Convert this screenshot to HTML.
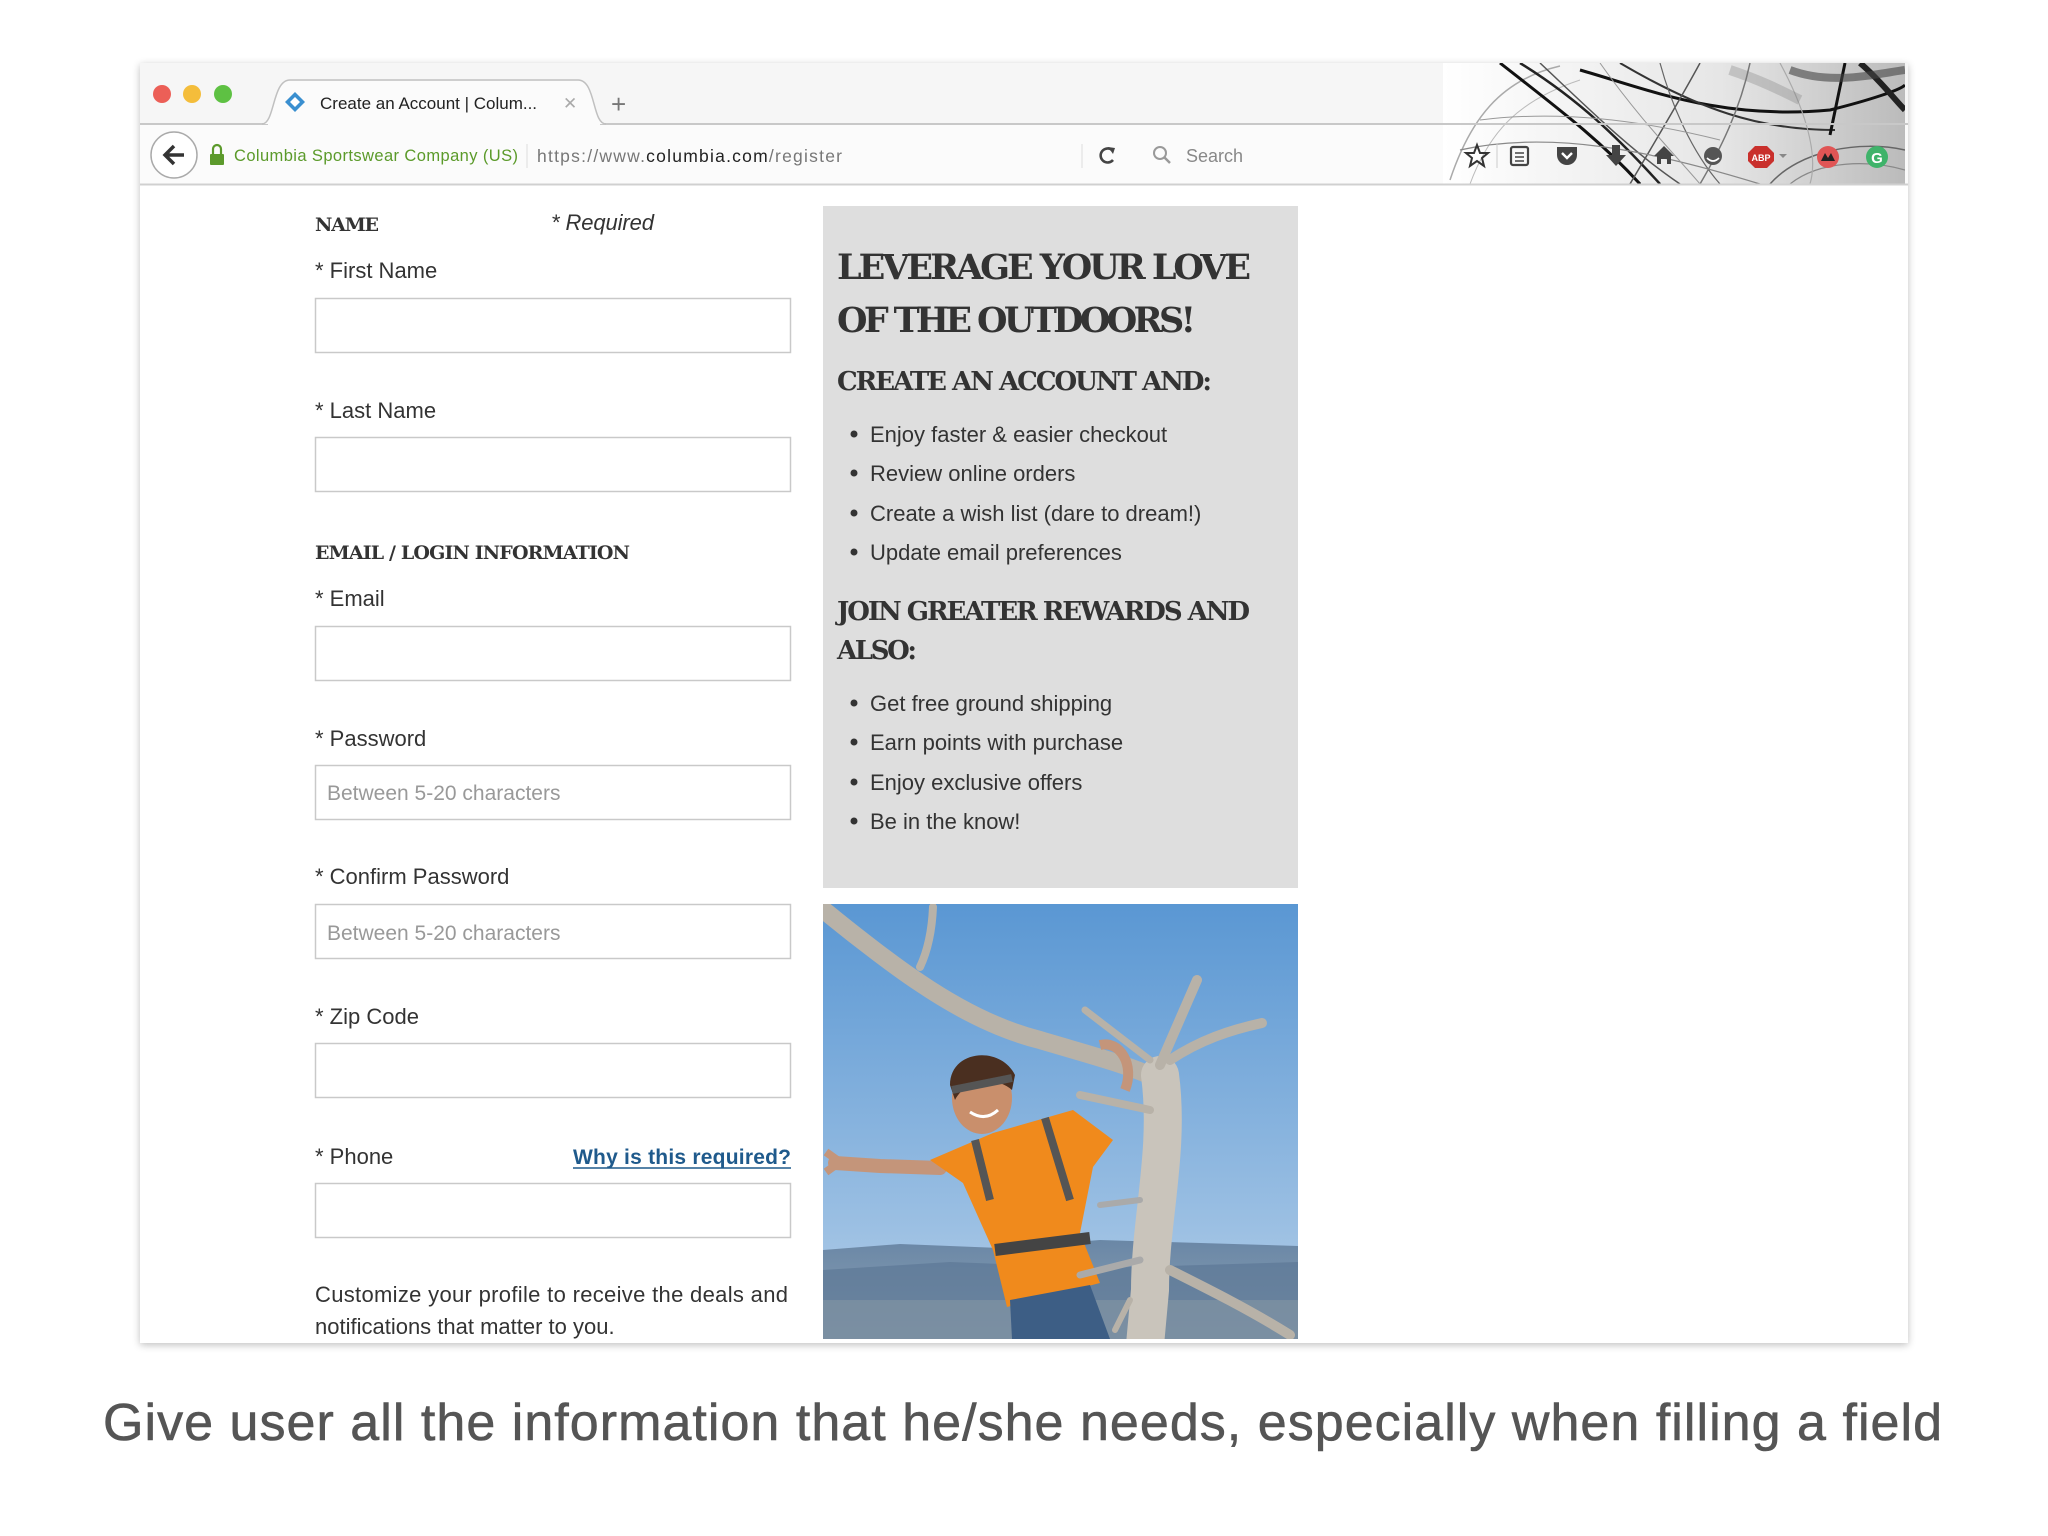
<!DOCTYPE html>
<html><head><meta charset="utf-8"><style>
html,body{margin:0;padding:0;background:#fff;width:2048px;height:1536px;overflow:hidden}
svg{display:block}
</style></head><body>
<svg width="2048" height="1536" viewBox="0 0 2048 1536" xmlns="http://www.w3.org/2000/svg" font-family="Liberation Sans, sans-serif">
<defs>
<filter id="sh" x="-5%" y="-5%" width="110%" height="110%"><feGaussianBlur stdDeviation="4"/></filter>
<linearGradient id="sky" x1="0" y1="0" x2="0" y2="1">
<stop offset="0" stop-color="#5a97d3"/><stop offset="0.75" stop-color="#9cc0e3"/><stop offset="1" stop-color="#b9d0e6"/></linearGradient>
<linearGradient id="mt" x1="0" y1="0" x2="0" y2="1">
<stop offset="0" stop-color="#6a87a6"/><stop offset="1" stop-color="#8fa3b4"/></linearGradient>
<linearGradient id="th" x1="0" y1="0" x2="1" y2="0">
<stop offset="0" stop-color="#fff"/><stop offset="0.6" stop-color="#e6e6e6"/><stop offset="1" stop-color="#bbb"/></linearGradient>
<clipPath id="thc"><rect x="1443" y="63" width="462" height="121"/></clipPath>
<clipPath id="phc"><rect x="823" y="904" width="475" height="435"/></clipPath>
</defs>
<rect x="140" y="65" width="1768" height="1280" fill="#000" opacity="0.25" filter="url(#sh)"/>
<rect x="140" y="63" width="1768" height="1280" fill="#fff"/>
<rect x="140" y="63" width="1768" height="61" fill="#f6f6f6"/>
<rect x="140" y="124" width="1768" height="60" fill="#fbfbfb"/>
<!-- theme -->
<g clip-path="url(#thc)" fill="none">
<rect x="1443" y="63" width="462" height="121" fill="url(#th)"/>
<path d="M1450 180 C1470 120 1500 80 1560 66" stroke="#aaa" stroke-width="1.5"/>
<path d="M1470 184 C1490 130 1520 100 1580 80" stroke="#bbb" stroke-width="1"/>
<path d="M1500 63 C1560 110 1600 140 1640 184" stroke="#111" stroke-width="3"/>
<path d="M1520 63 C1580 100 1620 140 1660 184" stroke="#222" stroke-width="2.5"/>
<path d="M1540 63 C1590 110 1630 150 1680 184" stroke="#555" stroke-width="1.5"/>
<path d="M1580 70 C1650 90 1720 120 1830 110 C1870 100 1900 90 1905 85" stroke="#111" stroke-width="3"/>
<path d="M1620 63 C1700 110 1760 130 1835 130" stroke="#333" stroke-width="2"/>
<path d="M1845 63 L1830 135" stroke="#111" stroke-width="3"/>
<path d="M1700 63 C1680 100 1650 150 1630 184" stroke="#555" stroke-width="1.5"/>
<path d="M1750 63 C1740 110 1720 150 1700 184" stroke="#777" stroke-width="1.5"/>
<path d="M1660 63 C1670 100 1690 150 1720 184" stroke="#666" stroke-width="1.2"/>
<path d="M1460 150 C1550 130 1650 150 1760 184" stroke="#888" stroke-width="1.2"/>
<path d="M1480 120 C1560 110 1640 120 1720 140" stroke="#999" stroke-width="1"/>
<path d="M1770 184 C1800 150 1860 140 1905 150" stroke="#666" stroke-width="1.5"/>
<path d="M1790 184 C1820 160 1870 160 1905 170" stroke="#888" stroke-width="1.2"/>
<path d="M1600 63 C1640 120 1680 160 1700 184" stroke="#999" stroke-width="1"/>
<path d="M1780 63 C1800 100 1820 150 1810 184" stroke="#aaa" stroke-width="1.2"/>
<path d="M1860 63 C1880 80 1895 100 1905 110" stroke="#222" stroke-width="6"/>
<path d="M1790 70 C1830 85 1870 75 1905 70" stroke="#444" stroke-width="8" opacity="0.6"/>
<path d="M1730 70 C1760 80 1780 90 1800 100" stroke="#777" stroke-width="10" opacity="0.3"/>
</g>
<line x1="140" y1="124" x2="1908" y2="124" stroke="#c8c8c8" stroke-width="2"/>
<line x1="140" y1="184.5" x2="1908" y2="184.5" stroke="#d0d0d0" stroke-width="2"/>
<circle cx="162" cy="94" r="9" fill="#ec5f57"/>
<circle cx="192" cy="94" r="9" fill="#f4bd3b"/>
<circle cx="223" cy="94" r="9" fill="#5ec143"/>
<path d="M262 124 C275 124 272 80 290 80 L578 80 C596 80 592 124 606 124" fill="#fbfbfb" stroke="#c0c0c0" stroke-width="1.5"/>
<rect x="268" y="122" width="332" height="4" fill="#fbfbfb"/>
<g transform="translate(295,102)"><path d="M0 -10 L10 0 L0 10 L-10 0Z" fill="#3a8fd0"/><path d="M0 -5 L5 0 L0 5 L-5 0Z" fill="#fff"/></g>
<text x="320" y="109" font-size="17" fill="#222">Create an Account | Colum...</text>
<text x="563" y="109" font-size="17" fill="#aaa">✕</text>
<text x="611" y="113" font-size="26" fill="#777">+</text>
<circle cx="174" cy="155" r="23" fill="#fff" stroke="#aaa" stroke-width="1.5"/>
<path d="M184 155 H166 M174 146 L165 155 L174 164" stroke="#333" stroke-width="3.5" fill="none"/>
<rect x="210" y="154" width="14" height="11" rx="1" fill="#5c9a2c"/>
<path d="M213 154 V149 A4 4 0 0 1 221 149 V154" stroke="#5c9a2c" stroke-width="2.2" fill="none"/>
<text x="234" y="161" font-size="16.5" fill="#5b9a2a" textLength="284">Columbia Sportswear Company (US)</text>
<line x1="527" y1="144" x2="527" y2="168" stroke="#ddd"/>
<text x="537" y="162" font-size="17.5" fill="#777" textLength="305">https://www.<tspan fill="#222">columbia.com</tspan>/register</text>
<line x1="1082" y1="144" x2="1082" y2="168" stroke="#ddd"/>
<path d="M1112 150 A7 7 0 1 0 1113 160" stroke="#444" stroke-width="2.6" fill="none"/><path d="M1108 147 L1115 148 L1113 154" fill="#444"/>
<circle cx="1160" cy="153" r="6" stroke="#999" stroke-width="2" fill="none"/><line x1="1164" y1="157" x2="1170" y2="163" stroke="#999" stroke-width="2.5"/>
<text x="1186" y="162" font-size="18" fill="#888">Search</text>
<path d="M1477 145 L1480 153 L1488 153 L1482 158 L1484 166 L1477 161 L1470 166 L1472 158 L1466 153 L1474 153Z" fill="none" stroke="#333" stroke-width="2"/>
<line x1="1497" y1="143" x2="1497" y2="168" stroke="#ccc"/>
<rect x="1511" y="147" width="17" height="18" rx="2" fill="none" stroke="#444" stroke-width="2.2"/><path d="M1515 153h9M1515 157h9M1515 161h9" stroke="#444" stroke-width="1.6"/>
<path d="M1557 147 H1577 V155 A10 10 0 0 1 1557 155Z" fill="#444"/><path d="M1562 153 L1567 158 L1572 153" stroke="#fff" stroke-width="2.4" fill="none"/>
<path d="M1612 145 H1620 V155 H1626 L1616 166 L1606 155 H1612Z" fill="#444"/>
<path d="M1664 146 L1674 156 H1671 V164 H1667 V159 H1661 V164 H1657 V156 H1654Z" fill="#444"/>
<circle cx="1713" cy="156" r="9" fill="#555"/><path d="M1707 158 Q1713 164 1719 158" stroke="#fff" stroke-width="1.6" fill="none"/>
<path d="M1755 146 h12 l7 7 v8 l-7 7 h-12 l-7 -7 v-8z" fill="#c9302c"/><text x="1761" y="161" font-size="9" fill="#fff" text-anchor="middle" font-weight="bold">ABP</text>
<path d="M1779 154 l4 4 l4 -4z" fill="#888"/>
<circle cx="1828" cy="157" r="11" fill="#e05555"/><path d="M1821 161 l4 -8 l3 5 l3 -5 l4 8z" fill="#222"/>
<circle cx="1877" cy="157" r="11" fill="#3fb36a"/><text x="1877" y="163" font-size="15" fill="#fff" text-anchor="middle" font-weight="bold">G</text>

<g fill="#333" font-size="22">
<text x="315" y="231" font-family="DejaVu Serif, serif" font-weight="bold" font-size="19" textLength="64">NAME</text>
<text x="551" y="230" font-style="italic" textLength="103">* Required</text>
<text x="315" y="278">* First Name</text>
<text x="315" y="418">* Last Name</text>
<text x="315" y="559" font-family="DejaVu Serif, serif" font-weight="bold" font-size="19" textLength="315">EMAIL / LOGIN INFORMATION</text>
<text x="315" y="606">* Email</text>
<text x="315" y="746">* Password</text>
<text x="315" y="884">* Confirm Password</text>
<text x="315" y="1024">* Zip Code</text>
<text x="315" y="1164">* Phone</text>
<text x="791" y="1164" text-anchor="end" fill="#1f5a8c" textLength="218" font-weight="bold" font-size="21">Why is this required?</text>
<line x1="573" y1="1168" x2="791" y2="1168" stroke="#1f5a8c" stroke-width="1.5"/>
<text x="315" y="1302" textLength="473">Customize your profile to receive the deals and</text>
<text x="315" y="1334">notifications that matter to you.</text>
</g>
<g fill="#fff" stroke="#c9c9c9" stroke-width="1.5">
<rect x="315.5" y="298.5" width="475" height="54"/>
<rect x="315.5" y="437.5" width="475" height="54"/>
<rect x="315.5" y="626.5" width="475" height="54"/>
<rect x="315.5" y="765.5" width="475" height="54"/>
<rect x="315.5" y="904.5" width="475" height="54"/>
<rect x="315.5" y="1043.5" width="475" height="54"/>
<rect x="315.5" y="1183.5" width="475" height="54"/>
</g>
<g fill="#999" font-size="21">
<text x="327" y="800">Between 5-20 characters</text>
<text x="327" y="940">Between 5-20 characters</text>
</g>

<rect x="823" y="206" width="475" height="682" fill="#dedede"/>
<g fill="#333" font-family="DejaVu Serif, serif" font-weight="bold">
<text x="837" y="279" font-size="35" textLength="414">LEVERAGE YOUR LOVE</text>
<text x="837" y="332" font-size="35" textLength="359">OF THE OUTDOORS!</text>
<text x="837" y="390" font-size="26" textLength="375">CREATE AN ACCOUNT AND:</text>
<text x="837" y="620" font-size="26" textLength="413">JOIN GREATER REWARDS AND</text>
<text x="837" y="659" font-size="26" textLength="80">ALSO:</text>
</g>
<g fill="#333" font-size="22">
<circle cx="854" cy="434" r="3.5"/><text x="870" y="442">Enjoy faster &amp; easier checkout</text>
<circle cx="854" cy="473" r="3.5"/><text x="870" y="481">Review online orders</text>
<circle cx="854" cy="513" r="3.5"/><text x="870" y="521">Create a wish list (dare to dream!)</text>
<circle cx="854" cy="552" r="3.5"/><text x="870" y="560">Update email preferences</text>
<circle cx="854" cy="703" r="3.5"/><text x="870" y="711">Get free ground shipping</text>
<circle cx="854" cy="742" r="3.5"/><text x="870" y="750">Earn points with purchase</text>
<circle cx="854" cy="782" r="3.5"/><text x="870" y="790">Enjoy exclusive offers</text>
<circle cx="854" cy="821" r="3.5"/><text x="870" y="829">Be in the know!</text>
</g>

<g clip-path="url(#phc)">
<rect x="823" y="904" width="475" height="435" fill="url(#sky)"/>
<path d="M823 1250 L900 1244 L1000 1248 L1100 1240 L1298 1246 V1339 H823Z" fill="url(#mt)"/>
<path d="M823 1270 L950 1262 L1100 1268 L1298 1262 V1339 H823Z" fill="#5c7896" opacity="0.7"/>
<path d="M823 1300 H1298 V1339 H823Z" fill="#8a9aa6" opacity="0.5"/>
<path d="M940 1168 L880 1166 L835 1163" stroke="#c4957a" stroke-width="14" stroke-linecap="round" fill="none"/>
<path d="M826 1152 L840 1162 L826 1172" stroke="#c4957a" stroke-width="8" fill="none"/>
<path d="M930 1160 L993 1133 L1073 1110 L1113 1140 L1093 1167 L1080 1233 L1100 1283 L1007 1307 L993 1250 L963 1183Z" fill="#f08a1c"/>
<path d="M975 1140 L990 1200 M1045 1118 L1070 1200" stroke="#555" stroke-width="8" fill="none"/>
<path d="M995 1250 L1090 1238" stroke="#444" stroke-width="12"/>
<path d="M1010 1300 L1090 1285 L1110 1339 L1012 1339Z" fill="#3d5e85"/>
<ellipse cx="982" cy="1098" rx="30" ry="36" fill="#c98f6c"/>
<path d="M950 1085 C950 1050 1000 1045 1015 1075 L1012 1090 C995 1075 965 1080 955 1100Z" fill="#4a2f20"/>
<path d="M952 1090 L1012 1078" stroke="#555" stroke-width="8"/>
<path d="M970 1112 Q985 1122 998 1110" stroke="#fff" stroke-width="3" fill="none"/>
<g stroke="#b8b2a8" fill="none" stroke-linecap="round">
<path d="M820 907 C860 940 900 970 920 983 C960 1010 1000 1030 1040 1040 C1090 1055 1130 1065 1160 1080" stroke-width="18"/>
<path d="M933 907 C932 930 928 950 920 967" stroke-width="8"/>
<path d="M1160 1075 C1170 1150 1150 1220 1150 1290 L1145 1345" stroke-width="38" stroke="#c9c4bb"/>
<path d="M1160 1065 L1197 980" stroke-width="10"/>
<path d="M1170 1060 C1200 1040 1230 1030 1262 1023" stroke-width="10"/>
<path d="M1150 1060 L1085 1010" stroke-width="7"/>
<path d="M1150 1110 L1080 1095" stroke-width="8"/>
<path d="M1140 1200 L1100 1205" stroke="#aaa" stroke-width="6"/>
<path d="M1140 1260 L1080 1275" stroke="#aaa" stroke-width="7"/>
<path d="M1170 1270 C1210 1290 1250 1310 1290 1335" stroke-width="10"/>
<path d="M1130 1300 L1115 1330" stroke-width="6"/>
</g>
<path d="M1100 1045 C1120 1040 1135 1065 1125 1090" stroke="#c4957a" stroke-width="10" fill="none"/>
</g>

<text x="103" y="1440" font-size="52" fill="#555" stroke="#555" stroke-width="0.6" textLength="1839">Give user all the information that he/she needs, especially when filling a field</text>
</svg>
</body></html>
